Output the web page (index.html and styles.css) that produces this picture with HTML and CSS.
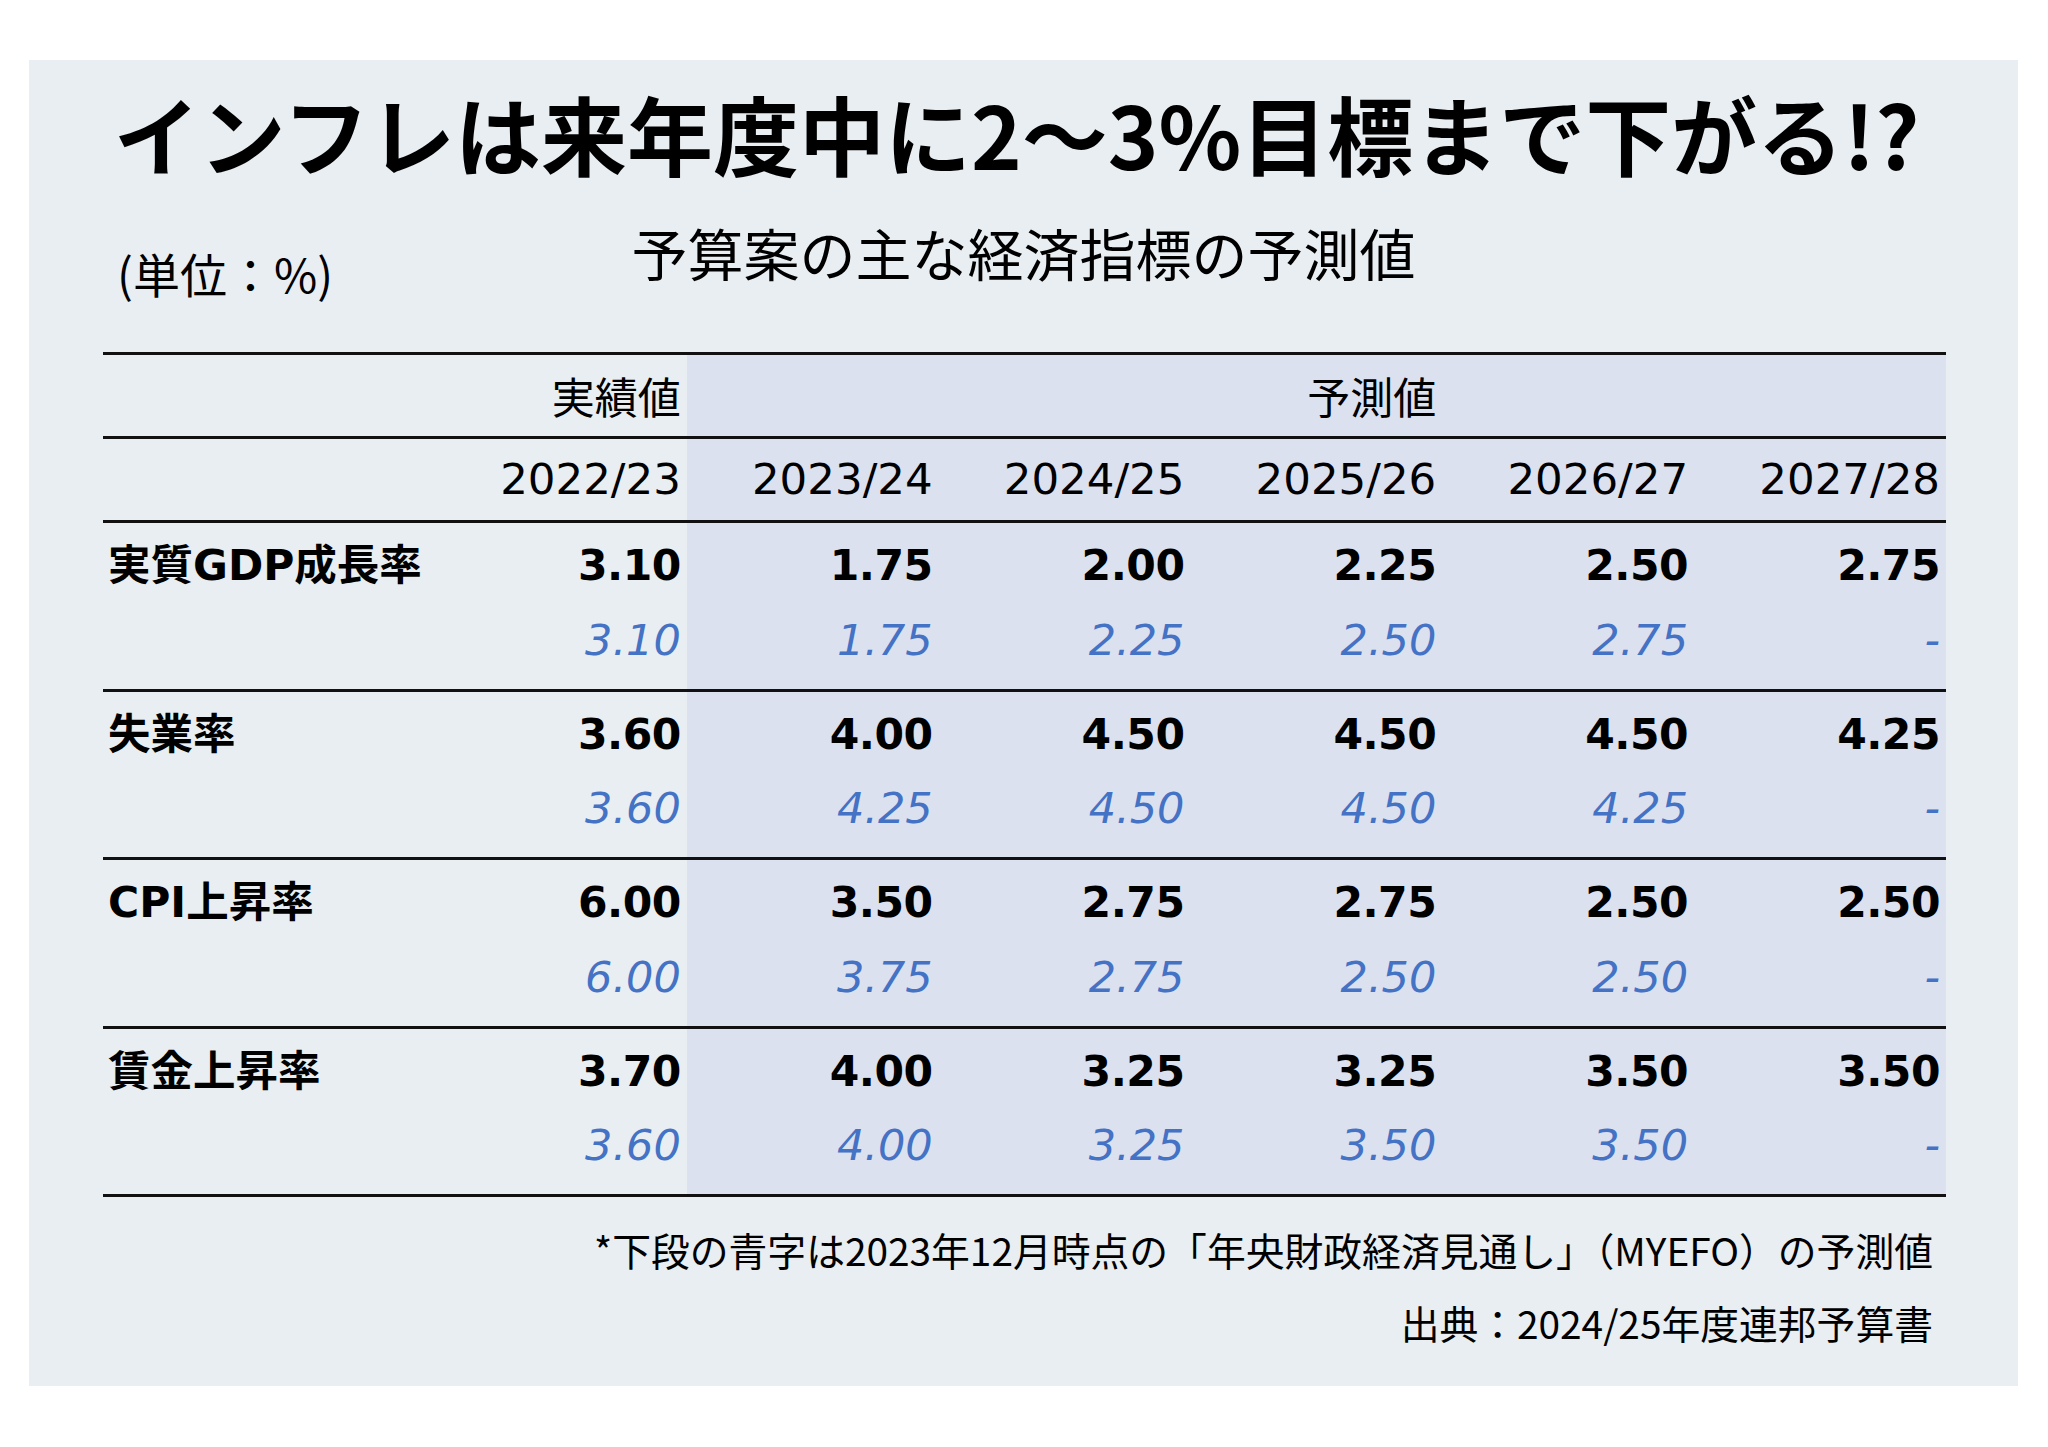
FILE: index.html
```html
<!DOCTYPE html>
<html lang="ja">
<head>
<meta charset="utf-8">
<title>インフレは来年度中に2～3%目標まで下がる!?</title>
<link rel="stylesheet" href="styles.css">
</head>
<body>
<div class="panel">
  <h1 class="title">インフレは来年度中に2～3%目標まで下がる!?</h1>
  <div class="subhead">
    <div class="unit">(単位：%)</div>
    <div class="subtitle">予算案の主な経済指標の予測値</div>
    <div></div>
  </div>
  <table class="data">
    <colgroup>
      <col class="c-label">
      <col class="c-val"><col class="c-val"><col class="c-val"><col class="c-val"><col class="c-val"><col class="c-val">
    </colgroup>
    <thead>
      <tr class="h1">
        <th></th><th class="head">実績値</th>
        <th class="f"></th><th class="f"></th><th class="f head">予測値</th><th class="f"></th><th class="f"></th>
      </tr>
      <tr class="h2">
        <th></th><th class="year">2022/23</th>
        <th class="f year">2023/24</th><th class="f year">2024/25</th><th class="f year">2025/26</th><th class="f year">2026/27</th><th class="f year">2027/28</th>
      </tr>
    </thead>
    <tbody>
      <tr class="main">
        <th class="label">実質GDP成長率</th><td>3.10</td>
        <td class="f">1.75</td><td class="f">2.00</td><td class="f">2.25</td><td class="f">2.50</td><td class="f">2.75</td>
      </tr>
      <tr class="sub">
        <th></th><td>3.10</td>
        <td class="f">1.75</td><td class="f">2.25</td><td class="f">2.50</td><td class="f">2.75</td><td class="f">-</td>
      </tr>
    </tbody>
    <tbody>
      <tr class="main">
        <th class="label">失業率</th><td>3.60</td>
        <td class="f">4.00</td><td class="f">4.50</td><td class="f">4.50</td><td class="f">4.50</td><td class="f">4.25</td>
      </tr>
      <tr class="sub">
        <th></th><td>3.60</td>
        <td class="f">4.25</td><td class="f">4.50</td><td class="f">4.50</td><td class="f">4.25</td><td class="f">-</td>
      </tr>
    </tbody>
    <tbody>
      <tr class="main">
        <th class="label">CPI上昇率</th><td>6.00</td>
        <td class="f">3.50</td><td class="f">2.75</td><td class="f">2.75</td><td class="f">2.50</td><td class="f">2.50</td>
      </tr>
      <tr class="sub">
        <th></th><td>6.00</td>
        <td class="f">3.75</td><td class="f">2.75</td><td class="f">2.50</td><td class="f">2.50</td><td class="f">-</td>
      </tr>
    </tbody>
    <tbody class="last">
      <tr class="main">
        <th class="label">賃金上昇率</th><td>3.70</td>
        <td class="f">4.00</td><td class="f">3.25</td><td class="f">3.25</td><td class="f">3.50</td><td class="f">3.50</td>
      </tr>
      <tr class="sub">
        <th></th><td>3.60</td>
        <td class="f">4.00</td><td class="f">3.25</td><td class="f">3.50</td><td class="f">3.50</td><td class="f">-</td>
      </tr>
    </tbody>
  </table>
  <div class="notes">
    <p>*下段の青字は2023年12月時点の「年央財政経済見通し」（MYEFO）の予測値</p>
    <p>出典：2024/25年度連邦予算書</p>
  </div>
</div>
</body>
</html>
```

FILE: styles.css
```css
html, body {
  margin: 0;
  padding: 0;
  background: #ffffff;
}

body {
  font-family: "Noto Sans CJK JP", sans-serif;
  color: #000;
}

.panel {
  box-sizing: border-box;
  width: 1989px;
  height: 1326px;
  margin: 60px 0 0 29px;
  padding: 23px 0 0 74px;
  background: #e9eef2;
  display: flex;
  flex-direction: column;
}

.title {
  margin: 0 0 0 -74px;
  padding-right: 14px;
  font-family: "Noto Sans CJK JP", sans-serif;
  font-weight: 700;
  font-size: 86px;
  line-height: 100px;
  height: 100px;
  text-align: center;
  letter-spacing: 0;
}

.subhead {
  margin: 29px 0 0 -74px;
  display: grid;
  grid-template-columns: 1fr auto 1fr;
  align-items: start;
}

.unit {
  padding-left: 88px;
  margin-top: 31px;
  font-size: 47px;
  line-height: 60px;
}

.subtitle {
  font-size: 56px;
  line-height: 80px;
}

.data {
  margin-top: 49px;
  width: 1843px;
  table-layout: fixed;
  border-collapse: separate;
  border-spacing: 0;
  font-family: "DejaVu Sans", "Noto Sans CJK JP", sans-serif;
}

.c-label { width: 332px; }
.c-val { width: 251.8px; }

.data th,
.data td {
  padding: 0 6px 0 0;
  text-align: right;
  vertical-align: middle;
  line-height: 1.2;
  white-space: nowrap;
  font-weight: 400;
}

.data .f {
  background: #dce1f0;
}

.h1 > *,
.h2 > *,
.main > * {
  border-top: 3px solid #111;
}

.h1 { height: 84px; }
.h2 { height: 84px; }

.h1 > * { padding-bottom: 5px; }

.head {
  font-family: "Noto Sans CJK JP", sans-serif;
  font-size: 43px;
}

.year {
  font-size: 43.5px;
}

.main { height: 85px; }
.sub { height: 83.5px; }

.main td {
  font-weight: 700;
  font-size: 42.5px;
  letter-spacing: -0.5px;
  padding-top: 3px;
}

.sub td {
  font-style: italic;
  font-size: 43px;
  color: #4472c4;
  padding-bottom: 12px;
}

.last .sub > * {
  border-bottom: 3px solid #111;
}

.last .sub { height: 86.5px; }

.data .label {
  text-align: left;
  padding-left: 5px;
  padding-top: 3px;
  font-weight: 700;
  font-size: 42.5px;
}

.notes {
  margin: 16px 85px 0 -74px;
  text-align: right;
}

.notes p {
  margin: 0;
  font-size: 38.8px;
  line-height: 73px;
}
```
